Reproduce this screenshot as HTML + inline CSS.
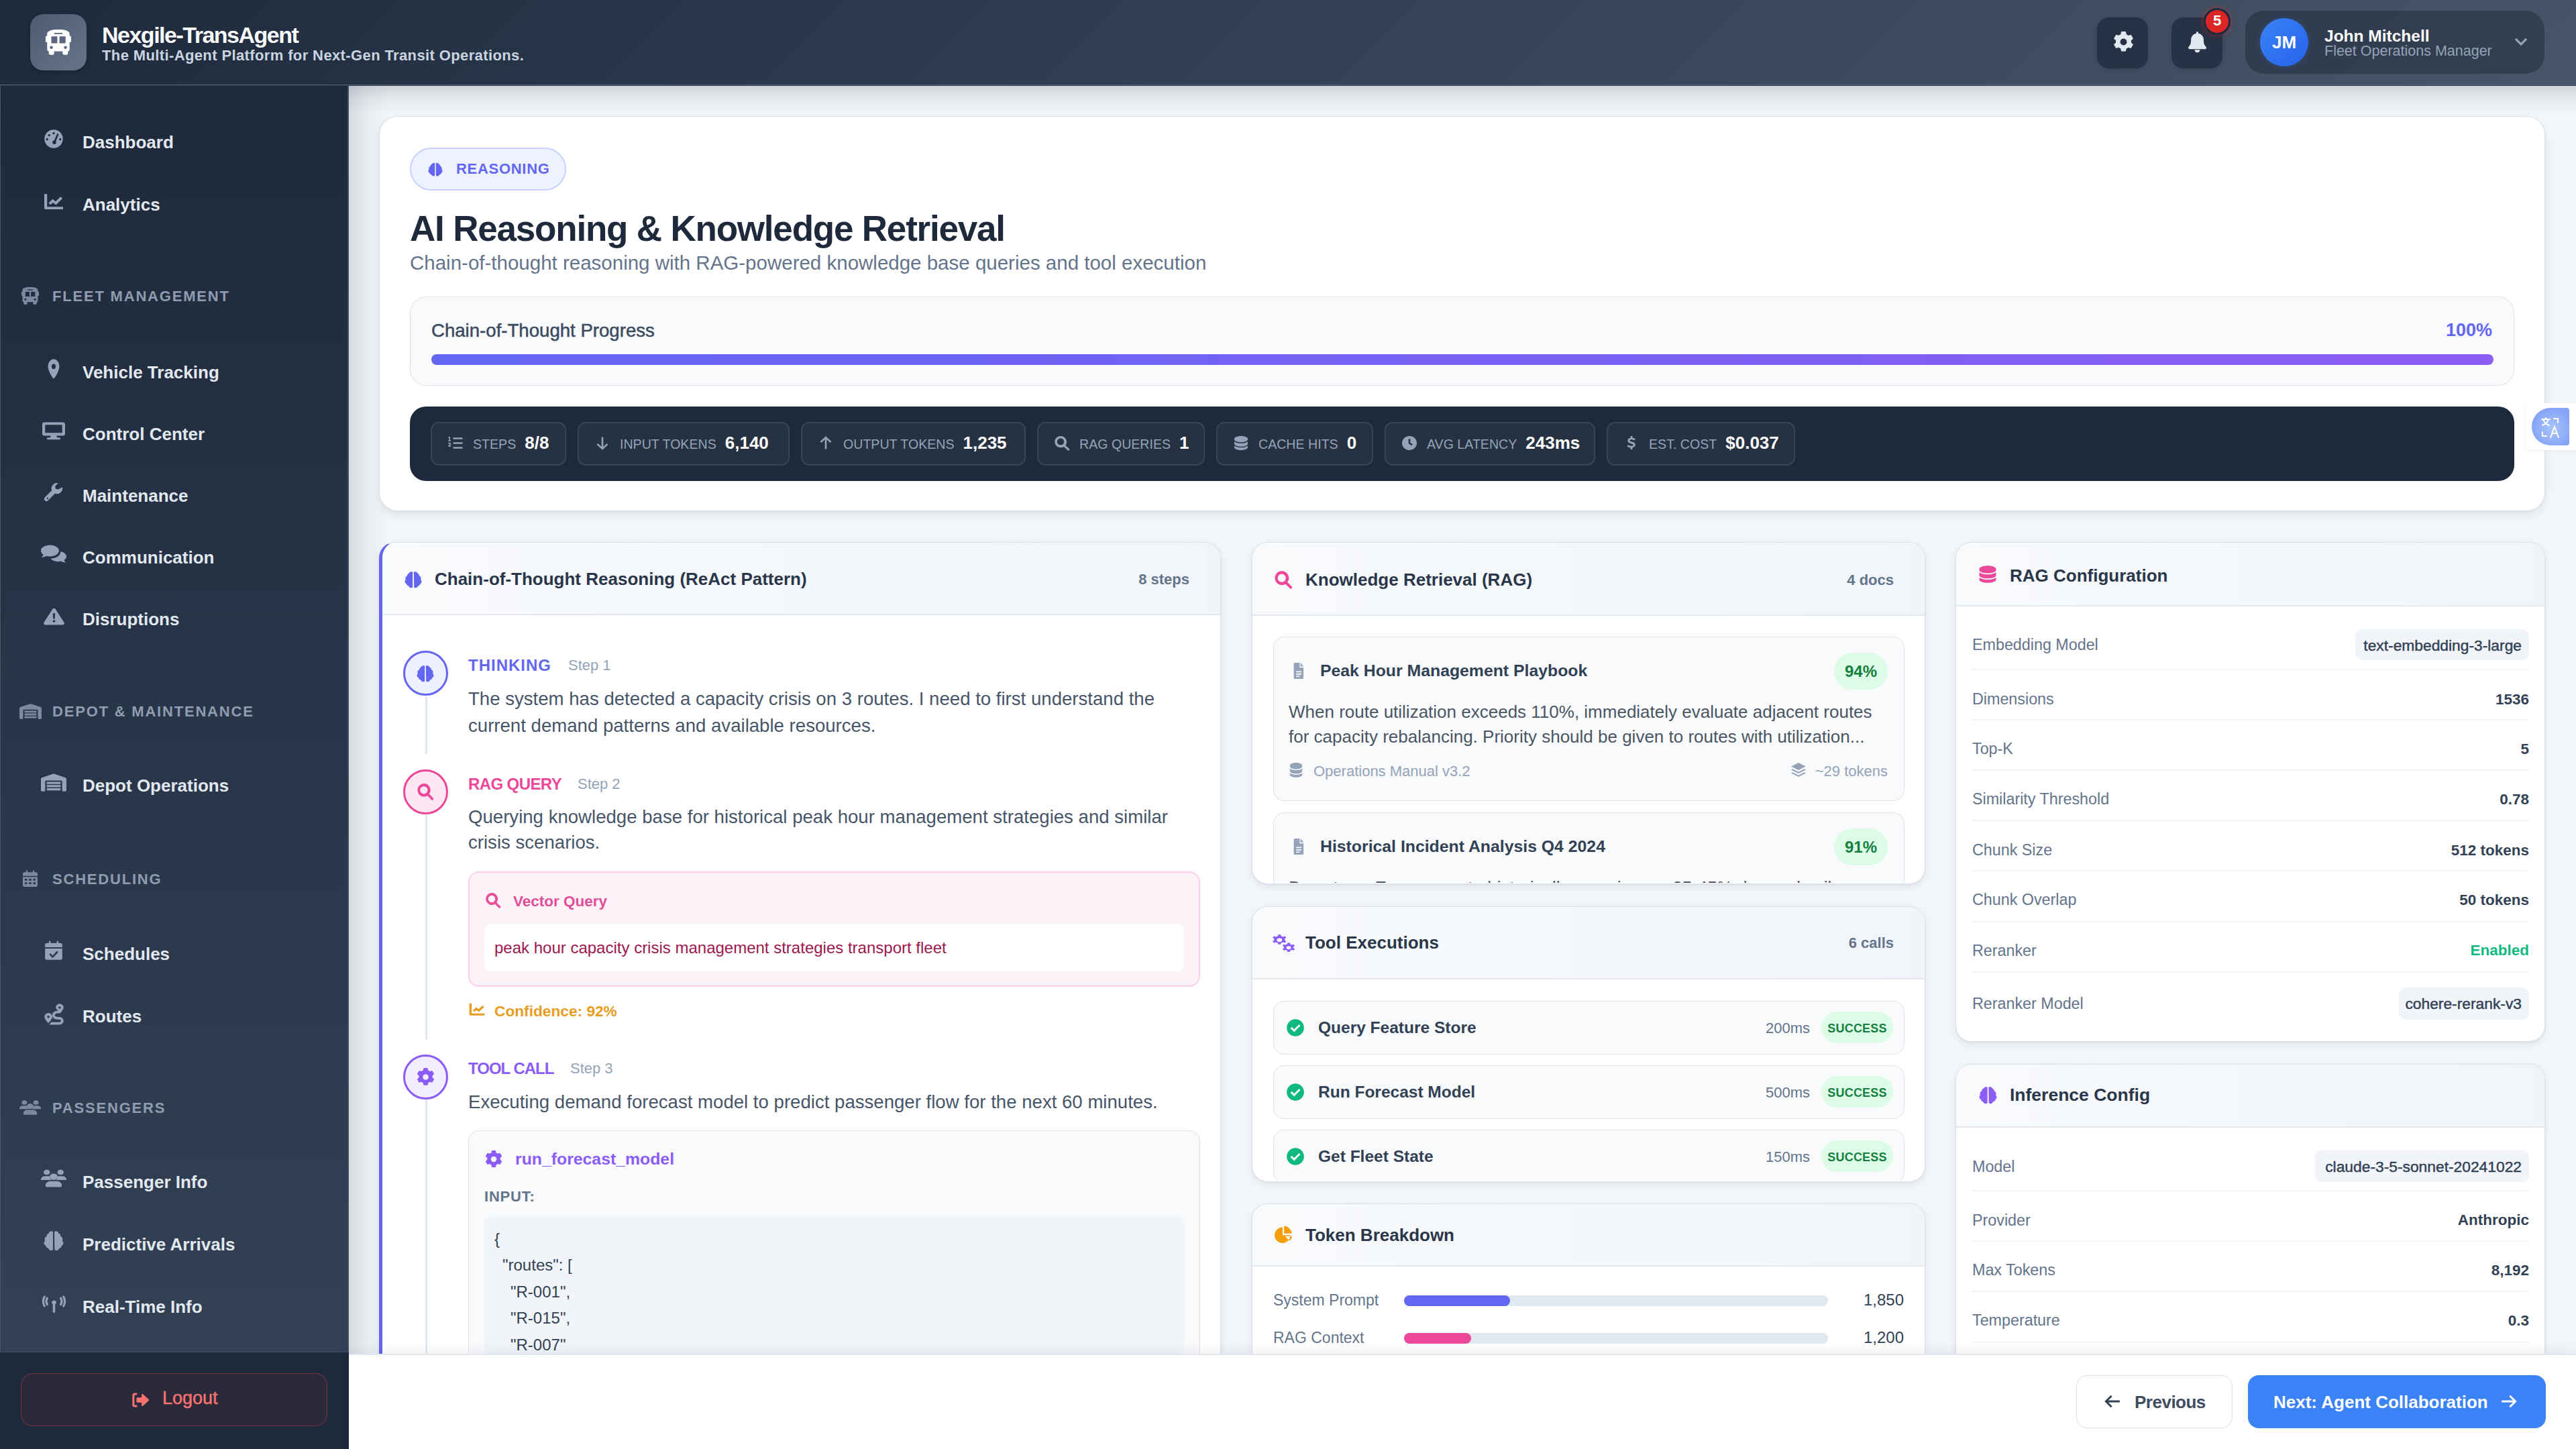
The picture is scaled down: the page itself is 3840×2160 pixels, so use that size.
<!DOCTYPE html>
<html><head><meta charset="utf-8"><title>Nexgile-TransAgent</title>
<style>
*{margin:0;padding:0;box-sizing:border-box;}
html,body{width:3840px;height:2160px;overflow:hidden;background:#f1f5f9;font-family:"Liberation Sans",sans-serif;}
.a{position:absolute;}
.t{position:absolute;white-space:nowrap;line-height:1;}
svg.a{overflow:visible;}
</style></head><body>
<div class="a" style="left:520px;top:128px;width:3320px;height:1890px;background:#f2f5f9;"></div>
<div class="a" style="left:520px;top:128px;width:3320px;height:44px;background:linear-gradient(to bottom,rgba(15,23,42,0.15),rgba(15,23,42,0.05) 45%,rgba(15,23,42,0));"></div>
<div class="a" style="left:520px;top:128px;width:60px;height:1890px;background:linear-gradient(to right,rgba(15,23,42,0.12),rgba(15,23,42,0.04) 45%,rgba(15,23,42,0));"></div>
<div class="a" style="left:0px;top:0px;width:3840px;height:126px;background:linear-gradient(135deg,#1e293b 0%,#334155 50%,#475569 100%);"></div>
<div class="a" style="left:0px;top:126px;width:3840px;height:1px;background:#56627a;"></div>
<div class="a" style="left:0px;top:127px;width:3840px;height:1px;background:#2b3647;"></div>
<div class="a" style="left:45px;top:21px;width:84px;height:84px;border-radius:20px;background:linear-gradient(135deg,#4e5b72,#66748c);box-shadow:0 2px 6px rgba(0,0,0,0.25);"></div>
<svg class="a" style="left:67.5px;top:44.2px;" width="38" height="38" viewBox="0 0 24 24" preserveAspectRatio="none"><path fill="#ffffff" fill-rule="evenodd" d="M1.45 4C1.45 1.2 6 0 12 0S22.55 1.2 22.55 4V19a1.5 1.5 0 0 1-1.5 1.5H2.95A1.5 1.5 0 0 1 1.45 19zM8.1 3.2v1.1h7.8V3.2zM5.4 6.4v6.6h5.6V6.4zm7.6 0v6.6h5.8V6.4zM5.4 15.45a1.45 1.45 0 1 0 0 2.9a1.45 1.45 0 1 0 0-2.9zm13.3 0a1.45 1.45 0 1 0 0 2.9a1.45 1.45 0 1 0 0-2.9z M1.45 6v6H1a1 1 0 0 1-1-1V7a1 1 0 0 1 1-1z M22.55 6v6H23a1 1 0 0 0 1-1V7a1 1 0 0 0-1-1z M3 20.5h5v1.9a1.5 1.5 0 0 1-1.5 1.5h-2A1.5 1.5 0 0 1 3 22.4z M16 20.5h5v1.9a1.5 1.5 0 0 1-1.5 1.5h-2a1.5 1.5 0 0 1-1.5-1.5z"/></svg>
<div class="t" style="left:152px;top:34.9px;font-size:34px;color:#f8fafc;font-weight:700;letter-spacing:-1.5px;">Nexgile-TransAgent</div>
<div class="t" style="left:152px;top:72.1px;font-size:22px;color:#cbd5e1;font-weight:700;letter-spacing:0.38px;">The Multi-Agent Platform for Next-Gen Transit Operations.</div>
<div class="a" style="left:3126px;top:26px;width:76px;height:76px;border-radius:18px;background:#263145;box-shadow:0 2px 6px rgba(0,0,0,0.15);"></div>
<svg class="a" style="left:3148.5px;top:45.5px;" width="33" height="33" viewBox="0 0 24 24" preserveAspectRatio="none"><path fill="#e2e8f0" fill-rule="evenodd" d="M9.6 0.8h4.8l.7 3c.8.3 1.5.7 2.1 1.2l2.9-.9l2.4 4.2l-2.2 2c.1.8.1 1.6 0 2.4l2.2 2l-2.4 4.2l-2.9-.9c-.6.5-1.3.9-2.1 1.2l-.7 3H9.6l-.7-3c-.8-.3-1.5-.7-2.1-1.2l-2.9.9l-2.4-4.2l2.2-2a8 8 0 0 1 0-2.4l-2.2-2l2.4-4.2l2.9.9c.6-.5 1.3-.9 2.1-1.2zM12 8.4a3.6 3.6 0 1 0 0 7.2a3.6 3.6 0 0 0 0-7.2z"/></svg>
<div class="a" style="left:3237px;top:26px;width:76px;height:76px;border-radius:18px;background:#273246;box-shadow:0 2px 6px rgba(0,0,0,0.15);"></div>
<svg class="a" style="left:3260px;top:46px;" width="31" height="31.5" viewBox="0 0 24 24" preserveAspectRatio="none"><path fill="#e2e8f0" fill-rule="evenodd" d="M10.8 1.2h2.4v1.6a7.3 7.3 0 0 1 6.1 7.2v1.8c0 2.2.8 4.3 2.3 6l.5.5a1.5 1.5 0 0 1-1.1 2.5H3a1.5 1.5 0 0 1-1.1-2.5l.5-.5a9 9 0 0 0 2.3-6V10a7.3 7.3 0 0 1 6.1-7.2z M9 21.5h6a3 3 0 0 1-6 0z"/></svg>
<div class="a" style="left:3285px;top:12px;width:40px;height:40px;border-radius:50%;background:#dc2626;border:3px solid #1e293b;box-shadow:0 0 10px rgba(220,38,38,0.5);"></div>
<div class="t" style="left:3305px;transform:translateX(-50%);top:20.4px;font-size:22px;color:#ffffff;font-weight:700;letter-spacing:0px;">5</div>
<div class="a" style="left:3347px;top:16px;width:446px;height:94px;border-radius:28px;background:rgba(17,24,39,0.35);"></div>
<div class="a" style="left:3369px;top:27px;width:72px;height:72px;border-radius:50%;background:linear-gradient(135deg,#3b82f6,#2563eb);box-shadow:0 0 10px rgba(59,130,246,0.25);"></div>
<div class="t" style="left:3405px;transform:translateX(-50%);top:50.0px;font-size:26px;color:#ffffff;font-weight:700;letter-spacing:0px;">JM</div>
<div class="t" style="left:3465px;top:41.6px;font-size:24.5px;color:#ffffff;font-weight:700;letter-spacing:0px;">John Mitchell</div>
<div class="t" style="left:3465px;top:65.8px;font-size:21.5px;color:#94a3b8;font-weight:400;letter-spacing:0px;">Fleet Operations Manager</div>
<svg class="a" style="left:3747px;top:52px;" width="22" height="22" viewBox="0 0 24 24" preserveAspectRatio="none"><path fill="#94a3b8" fill-rule="evenodd" d="M2 7.6l2.4-2.4L12 12.8l7.6-7.6L22 7.6L12 17.6z"/></svg>
<div class="a" style="left:0px;top:128px;width:520px;height:1888px;background:linear-gradient(to bottom,#1e293b,#334155);border-left:1px solid #4b5669;border-right:2px solid #434e63;"></div>
<svg class="a" style="left:65.0px;top:191.7px;" width="30" height="30" viewBox="0 0 24 24" preserveAspectRatio="none"><path fill="#94a3b8" fill-rule="evenodd" d="M12 1a11 11 0 1 1 0 22a11 11 0 0 1 0-22zm0 3a1.3 1.3 0 1 0 0 2.6a1.3 1.3 0 0 0 0-2.6zM6.5 6.3a1.3 1.3 0 1 0 0 2.6a1.3 1.3 0 0 0 0-2.6zM4.2 11.2a1.3 1.3 0 1 0 0 2.6a1.3 1.3 0 0 0 0-2.6zm15.6 0a1.3 1.3 0 1 0 0 2.6a1.3 1.3 0 0 0 0-2.6zM16.3 5.6l-3.6 8.2a2.3 2.3 0 1 0 1.9.9l3.5-8.3z"/></svg>
<div class="t" style="left:123px;top:198.7px;font-size:26px;color:#e2e8f0;font-weight:700;letter-spacing:0px;">Dashboard</div>
<svg class="a" style="left:64.0px;top:287px;" width="32" height="28" viewBox="0 0 24 24" preserveAspectRatio="none"><path fill="#94a3b8" fill-rule="evenodd" d="M1.5 2h3.2v16.3H22.5v3.2H3.5a2 2 0 0 1-2-2z M6.2 13.6l4.7-5.3l3.4 3l5.2-5.9l2.4 2.1l-7.3 8.3l-3.4-3l-2.6 2.9z"/></svg>
<div class="t" style="left:123px;top:292.0px;font-size:26px;color:#e2e8f0;font-weight:700;letter-spacing:0px;">Analytics</div>
<svg class="a" style="left:32.0px;top:428px;" width="26" height="26" viewBox="0 0 24 24" preserveAspectRatio="none"><path fill="#7b8aa0" fill-rule="evenodd" d="M1.45 4C1.45 1.2 6 0 12 0S22.55 1.2 22.55 4V19a1.5 1.5 0 0 1-1.5 1.5H2.95A1.5 1.5 0 0 1 1.45 19zM8.1 3.2v1.1h7.8V3.2zM5.4 6.4v6.6h5.6V6.4zm7.6 0v6.6h5.8V6.4zM5.4 15.45a1.45 1.45 0 1 0 0 2.9a1.45 1.45 0 1 0 0-2.9zm13.3 0a1.45 1.45 0 1 0 0 2.9a1.45 1.45 0 1 0 0-2.9z M1.45 6v6H1a1 1 0 0 1-1-1V7a1 1 0 0 1 1-1z M22.55 6v6H23a1 1 0 0 0 1-1V7a1 1 0 0 0-1-1z M3 20.5h5v1.9a1.5 1.5 0 0 1-1.5 1.5h-2A1.5 1.5 0 0 1 3 22.4z M16 20.5h5v1.9a1.5 1.5 0 0 1-1.5 1.5h-2a1.5 1.5 0 0 1-1.5-1.5z"/></svg>
<div class="t" style="left:78px;top:431.4px;font-size:22px;color:#8f9cb1;font-weight:700;letter-spacing:1.8px;">FLEET MANAGEMENT</div>
<svg class="a" style="left:68.0px;top:534px;" width="24" height="31" viewBox="0 0 24 24" preserveAspectRatio="none"><path fill="#94a3b8" fill-rule="evenodd" d="M12 1a8.5 8.5 0 0 1 8.5 8.5c0 4.6-5.7 11.6-7.4 13.4a1.5 1.5 0 0 1-2.2 0C9.2 21.1 3.5 14.1 3.5 9.5A8.5 8.5 0 0 1 12 1zm0 5.5a3 3 0 1 0 0 6a3 3 0 0 0 0-6z"/></svg>
<div class="t" style="left:123px;top:542.0px;font-size:26px;color:#e2e8f0;font-weight:700;letter-spacing:0px;">Vehicle Tracking</div>
<svg class="a" style="left:63.0px;top:626.5px;" width="34" height="30" viewBox="0 0 24 24" preserveAspectRatio="none"><path fill="#94a3b8" fill-rule="evenodd" d="M2.5 2h19A2.5 2.5 0 0 1 24 4.5v11a2.5 2.5 0 0 1-2.5 2.5H15l.6 2.2h2.4a1.2 1.2 0 0 1 0 2.4H6a1.2 1.2 0 0 1 0-2.4h2.4L9 18H2.5A2.5 2.5 0 0 1 0 15.5v-11A2.5 2.5 0 0 1 2.5 2zm.5 3v9.5h18V5z"/></svg>
<div class="t" style="left:123px;top:633.5px;font-size:26px;color:#e2e8f0;font-weight:700;letter-spacing:0px;">Control Center</div>
<svg class="a" style="left:64.5px;top:718px;" width="31" height="31" viewBox="0 0 24 24" preserveAspectRatio="none"><path fill="#94a3b8" fill-rule="evenodd" d="M21.6 6.3a6.5 6.5 0 0 1-8.5 7.5L5.2 21.7a2.6 2.6 0 0 1-3.7-3.7l7.9-7.9a6.5 6.5 0 0 1 7.5-8.5l-3.6 3.6l.6 3.1l3.1.6zM3.8 18.6a.9.9 0 1 0 1.6 1a.9.9 0 0 0-1.6-1z"/></svg>
<div class="t" style="left:123px;top:726.0px;font-size:26px;color:#e2e8f0;font-weight:700;letter-spacing:0px;">Maintenance</div>
<svg class="a" style="left:61.0px;top:810px;" width="38" height="31" viewBox="0 0 24 24" preserveAspectRatio="none"><path fill="#94a3b8" fill-rule="evenodd" d="M8.5 2C13.2 2 17 4.9 17 8.5S13.2 15 8.5 15c-1.2 0-2.3-.2-3.3-.5C4 15.4 2.3 16 0.5 16c.9-.9 1.6-2 1.8-3C.9 11.8 0 10.2 0 8.5C0 4.9 3.8 2 8.5 2z M18.6 9.3C21.6 10.1 24 12.4 24 15.2c0 1.6-.8 3-2.2 4c.2 1 .8 2 1.7 2.8c-1.8 0-3.4-.6-4.6-1.5c-.9.3-2 .5-3.1.5c-3 0-5.5-1.4-6.6-3.5c5.3-.2 9.4-3.6 9.4-8.2z"/></svg>
<div class="t" style="left:123px;top:818.0px;font-size:26px;color:#e2e8f0;font-weight:700;letter-spacing:0px;">Communication</div>
<svg class="a" style="left:64.5px;top:905px;" width="31" height="28" viewBox="0 0 24 24" preserveAspectRatio="none"><path fill="#94a3b8" fill-rule="evenodd" d="M12 1.5c.7 0 1.3.4 1.7 1l10 17.2a2 2 0 0 1-1.7 3H2a2 2 0 0 1-1.7-3l10-17.2c.4-.6 1-1 1.7-1zm-1.3 6.5l.3 7h2l.3-7zM12 16.5a1.5 1.5 0 1 0 0 3a1.5 1.5 0 0 0 0-3z"/></svg>
<div class="t" style="left:123px;top:910.0px;font-size:26px;color:#e2e8f0;font-weight:700;letter-spacing:0px;">Disruptions</div>
<svg class="a" style="left:28.5px;top:1047px;" width="33" height="26" viewBox="0 0 24 24" preserveAspectRatio="none"><path fill="#7b8aa0" fill-rule="evenodd" d="M0 21.5V8.3c0-.9.5-1.7 1.3-2L11.2 2.2a2 2 0 0 1 1.6 0l9.9 4.1c.8.3 1.3 1.1 1.3 2v13.2a1.5 1.5 0 0 1-1.5 1.5h-1a1.5 1.5 0 0 1-1.5-1.5V11.2a1.2 1.2 0 0 0-1.2-1.2H5.2A1.2 1.2 0 0 0 4 11.2v10.3A1.5 1.5 0 0 1 2.5 23h-1A1.5 1.5 0 0 1 0 21.5z M5.5 11.5h13v2.6h-13z M5.5 15.3h13v2.6h-13z M5.5 19.1h13v2.6h-13z"/></svg>
<div class="t" style="left:78px;top:1050.4px;font-size:22px;color:#8f9cb1;font-weight:700;letter-spacing:1.8px;">DEPOT &amp; MAINTENANCE</div>
<svg class="a" style="left:61.0px;top:1151px;" width="38" height="30" viewBox="0 0 24 24" preserveAspectRatio="none"><path fill="#94a3b8" fill-rule="evenodd" d="M0 21.5V8.3c0-.9.5-1.7 1.3-2L11.2 2.2a2 2 0 0 1 1.6 0l9.9 4.1c.8.3 1.3 1.1 1.3 2v13.2a1.5 1.5 0 0 1-1.5 1.5h-1a1.5 1.5 0 0 1-1.5-1.5V11.2a1.2 1.2 0 0 0-1.2-1.2H5.2A1.2 1.2 0 0 0 4 11.2v10.3A1.5 1.5 0 0 1 2.5 23h-1A1.5 1.5 0 0 1 0 21.5z M5.5 11.5h13v2.6h-13z M5.5 15.3h13v2.6h-13z M5.5 19.1h13v2.6h-13z"/></svg>
<div class="t" style="left:123px;top:1158.0px;font-size:26px;color:#e2e8f0;font-weight:700;letter-spacing:0px;">Depot Operations</div>
<svg class="a" style="left:33.0px;top:1297px;" width="24" height="26" viewBox="0 0 24 24" preserveAspectRatio="none"><path fill="#7b8aa0" fill-rule="evenodd" d="M6 0.5h2v2.5h8V0.5h2v2.5h2.5A2.5 2.5 0 0 1 23 5.5V8H1V5.5A2.5 2.5 0 0 1 3.5 3H6z M1 9.5h22v11a2.5 2.5 0 0 1-2.5 2.5h-17A2.5 2.5 0 0 1 1 20.5zM4 12v2.5h3.5V12zm6.2 0v2.5h3.6V12zm6.3 0v2.5H20V12zM4 16.8v2.6h3.5v-2.6zm6.2 0v2.6h3.6v-2.6zm6.3 0v2.6H20v-2.6z"/></svg>
<div class="t" style="left:78px;top:1300.4px;font-size:22px;color:#8f9cb1;font-weight:700;letter-spacing:1.8px;">SCHEDULING</div>
<svg class="a" style="left:66.0px;top:1401.5px;" width="28" height="30" viewBox="0 0 24 24" preserveAspectRatio="none"><path fill="#94a3b8" fill-rule="evenodd" d="M6 0.5h2v2.5h8V0.5h2v2.5h2.5A2.5 2.5 0 0 1 23 5.5V8H1V5.5A2.5 2.5 0 0 1 3.5 3H6z M1 9.5h22v11a2.5 2.5 0 0 1-2.5 2.5h-17A2.5 2.5 0 0 1 1 20.5zM16.3 12.4l-5.6 5.6l-2.9-2.9l-1.5 1.5l4.4 4.4l7.1-7.1z"/></svg>
<div class="t" style="left:123px;top:1408.5px;font-size:26px;color:#e2e8f0;font-weight:700;letter-spacing:0px;">Schedules</div>
<svg class="a" style="left:64.5px;top:1495px;" width="31" height="30" viewBox="0 0 24 24" preserveAspectRatio="none"><path fill="#94a3b8" fill-rule="evenodd" d="M18.5 1a4.5 4.5 0 0 1 4.5 4.5c0 2.3-3 5.8-4 6.8h-2.8c-2 0-3.2 1-3.2 2.3s1.2 2.2 3.2 2.2h1.8c2.8 0 5 2 5 4.6S20.8 26 18 26H6.5l2.4-3h9.1c1.2 0 2-.7 2-1.6s-.8-1.6-2-1.6h-1.8c-3.8 0-6.2-2.3-6.2-5.2s2.4-5.3 6.2-5.3h.5C15.6 8 14 6.7 14 5.5A4.5 4.5 0 0 1 18.5 1zm0 3.1a1.4 1.4 0 1 0 0 2.8a1.4 1.4 0 0 0 0-2.8z M5.5 12A4.5 4.5 0 0 1 10 16.5c0 2.5-3.6 6.6-4.5 7.5C4.6 23.1 1 19 1 16.5A4.5 4.5 0 0 1 5.5 12zm0 3.1a1.4 1.4 0 1 0 0 2.8a1.4 1.4 0 0 0 0-2.8z"/></svg>
<div class="t" style="left:123px;top:1502.0px;font-size:26px;color:#e2e8f0;font-weight:700;letter-spacing:0px;">Routes</div>
<svg class="a" style="left:29.0px;top:1638px;" width="32" height="26" viewBox="0 0 24 24" preserveAspectRatio="none"><path fill="#7b8aa0" fill-rule="evenodd" d="M5.5 2a3 3 0 1 1 0 6a3 3 0 0 1 0-6zm13 0a3 3 0 1 1 0 6a3 3 0 0 1 0-6zM12 6.5a3.7 3.7 0 1 1 0 7.4a3.7 3.7 0 0 1 0-7.4zM4.2 9.5h2.6c.6 0 1.1.1 1.6.3A5.3 5.3 0 0 0 9.9 14H0v-.8A3.7 3.7 0 0 1 4.2 9.5zm13 0h2.6A3.7 3.7 0 0 1 24 13.2v.8h-9.9a5.3 5.3 0 0 0 1.5-4.2c.5-.2 1-.3 1.6-.3zM9 15.3h6a4.7 4.7 0 0 1 4.7 4.7v.5c0 .9-.7 1.5-1.5 1.5H5.8c-.8 0-1.5-.6-1.5-1.5V20A4.7 4.7 0 0 1 9 15.3z"/></svg>
<div class="t" style="left:78px;top:1641.4px;font-size:22px;color:#8f9cb1;font-weight:700;letter-spacing:1.8px;">PASSENGERS</div>
<svg class="a" style="left:61.0px;top:1741px;" width="38" height="31" viewBox="0 0 24 24" preserveAspectRatio="none"><path fill="#94a3b8" fill-rule="evenodd" d="M5.5 2a3 3 0 1 1 0 6a3 3 0 0 1 0-6zm13 0a3 3 0 1 1 0 6a3 3 0 0 1 0-6zM12 6.5a3.7 3.7 0 1 1 0 7.4a3.7 3.7 0 0 1 0-7.4zM4.2 9.5h2.6c.6 0 1.1.1 1.6.3A5.3 5.3 0 0 0 9.9 14H0v-.8A3.7 3.7 0 0 1 4.2 9.5zm13 0h2.6A3.7 3.7 0 0 1 24 13.2v.8h-9.9a5.3 5.3 0 0 0 1.5-4.2c.5-.2 1-.3 1.6-.3zM9 15.3h6a4.7 4.7 0 0 1 4.7 4.7v.5c0 .9-.7 1.5-1.5 1.5H5.8c-.8 0-1.5-.6-1.5-1.5V20A4.7 4.7 0 0 1 9 15.3z"/></svg>
<div class="t" style="left:123px;top:1749.0px;font-size:26px;color:#e2e8f0;font-weight:700;letter-spacing:0px;">Passenger Info</div>
<svg class="a" style="left:65.0px;top:1834px;" width="30" height="31" viewBox="0 0 24 24" preserveAspectRatio="none"><path fill="#94a3b8" fill-rule="evenodd" d="M11.2 1.5v21c-1.4 1-2.6.9-3.6.5c-1.3-.6-1.7-1.6-1.9-2.2c-1.6-.2-3-1.5-3.2-3.2C1 16.9.3 15.7.5 14.3c.1-1 .7-1.8 1.3-2.3C1.3 11.2 1.1 10.1 1.5 9c.4-1.1 1.2-1.8 2.2-2.1C3.5 5.3 4.5 3.9 6 3.4c.5-1.3 1.6-2.1 2.9-2.2c.9-.1 1.7 0 2.3.3z M12.8 1.5c.6-.3 1.4-.4 2.3-.3c1.3.1 2.4.9 2.9 2.2c1.5.5 2.5 1.9 2.3 3.5c1 .3 1.8 1 2.2 2.1c.4 1.1.2 2.2-.3 3c.6.5 1.2 1.3 1.3 2.3c.2 1.4-.5 2.6-1.7 3.3c-.2 1.7-1.6 3-3.2 3.2c-.2.6-.6 1.6-1.9 2.2c-1 .4-2.2.5-3.6-.5z"/></svg>
<div class="t" style="left:123px;top:1842.0px;font-size:26px;color:#e2e8f0;font-weight:700;letter-spacing:0px;">Predictive Arrivals</div>
<svg class="a" style="left:62.5px;top:1928px;" width="35" height="30" viewBox="0 0 24 24" preserveAspectRatio="none"><path fill="#94a3b8" fill-rule="evenodd" d="M12 8.5a2.3 2.3 0 0 1 1.2 4.3V22a1.2 1.2 0 0 1-2.4 0v-9.2A2.3 2.3 0 0 1 12 8.5z M4.6 4.2l1.9 1.2a8 8 0 0 0 0 8.2l-1.9 1.2a10.2 10.2 0 0 1 0-10.6z M19.4 4.2a10.2 10.2 0 0 1 0 10.6l-1.9-1.2a8 8 0 0 0 0-8.2z M1.7 2.5l1.9 1a13 13 0 0 0 0 12l-1.9 1a15.2 15.2 0 0 1 0-14z M22.3 2.5a15.2 15.2 0 0 1 0 14l-1.9-1a13 13 0 0 0 0-12z"/></svg>
<div class="t" style="left:123px;top:1935.0px;font-size:26px;color:#e2e8f0;font-weight:700;letter-spacing:0px;">Real-Time Info</div>
<div class="a" style="left:0px;top:2015px;width:520px;height:145px;background:#1e293b;border-top:1px solid #3f4b5e;"></div>
<div class="a" style="left:31px;top:2047px;width:457px;height:79px;border-radius:18px;background:rgba(239,68,68,0.06);border:1px solid rgba(239,68,68,0.38);"></div>
<svg class="a" style="left:195px;top:2073px;" width="28" height="28" viewBox="0 0 24 24" preserveAspectRatio="none"><path fill="#f87171" fill-rule="evenodd" d="M8 3H5a3 3 0 0 0-3 3v12a3 3 0 0 0 3 3h3v-2.6H5a.4.4 0 0 1-.4-.4V6a.4.4 0 0 1 .4-.4h3z M15.5 4.5l7.3 6.7a1.1 1.1 0 0 1 0 1.6l-7.3 6.7A1 1 0 0 1 13.8 18.8V15.3H8.5A1.3 1.3 0 0 1 7.2 14v-4A1.3 1.3 0 0 1 8.5 8.7h5.3V5.2A1 1 0 0 1 15.5 4.5z"/></svg>
<div class="t" style="left:242px;top:2071.1px;font-size:27px;color:#f87171;font-weight:400;letter-spacing:0px;-webkit-text-stroke:0.5px #f87171;">Logout</div>
<div class="a" style="left:565px;top:173px;width:3229px;height:589px;border-radius:28px;background:#ffffff;border:1px solid #dce2e9;box-shadow:0 6px 14px rgba(15,23,42,0.07),0 1px 3px rgba(15,23,42,0.05);"></div>
<div class="a" style="left:611px;top:220px;width:233px;height:64px;border-radius:32px;background:#eef2ff;border:2px solid #c7d2fe;"></div>
<svg class="a" style="left:638px;top:242px;" width="22" height="21" viewBox="0 0 24 24" preserveAspectRatio="none"><path fill="#6366f1" fill-rule="evenodd" d="M11.2 1.5v21c-1.4 1-2.6.9-3.6.5c-1.3-.6-1.7-1.6-1.9-2.2c-1.6-.2-3-1.5-3.2-3.2C1 16.9.3 15.7.5 14.3c.1-1 .7-1.8 1.3-2.3C1.3 11.2 1.1 10.1 1.5 9c.4-1.1 1.2-1.8 2.2-2.1C3.5 5.3 4.5 3.9 6 3.4c.5-1.3 1.6-2.1 2.9-2.2c.9-.1 1.7 0 2.3.3z M12.8 1.5c.6-.3 1.4-.4 2.3-.3c1.3.1 2.4.9 2.9 2.2c1.5.5 2.5 1.9 2.3 3.5c1 .3 1.8 1 2.2 2.1c.4 1.1.2 2.2-.3 3c.6.5 1.2 1.3 1.3 2.3c.2 1.4-.5 2.6-1.7 3.3c-.2 1.7-1.6 3-3.2 3.2c-.2.6-.6 1.6-1.9 2.2c-1 .4-2.2.5-3.6-.5z"/></svg>
<div class="t" style="left:680px;top:241.4px;font-size:22px;color:#6366f1;font-weight:700;letter-spacing:0.7px;">REASONING</div>
<div class="t" style="left:611px;top:314.1px;font-size:53px;color:#1e293b;font-weight:700;letter-spacing:-1.2px;">AI Reasoning &amp; Knowledge Retrieval</div>
<div class="t" style="left:611px;top:377.0px;font-size:29.5px;color:#64748b;font-weight:400;letter-spacing:0px;">Chain-of-thought reasoning with RAG-powered knowledge base queries and tool execution</div>
<div class="a" style="left:611px;top:442px;width:3137px;height:133px;border-radius:24px;background:#f8fafc;border:1px solid #dce2e9;"></div>
<div class="t" style="left:643px;top:478.6px;font-size:27.6px;color:#3b4a5e;font-weight:400;letter-spacing:0px;-webkit-text-stroke:0.5px #3b4a5e;">Chain-of-Thought Progress</div>
<div class="t" style="right:125px;top:479.1px;font-size:27px;color:#6366f1;font-weight:700;letter-spacing:0px;">100%</div>
<div class="a" style="left:643px;top:528px;width:3074px;height:16px;border-radius:8px;background:linear-gradient(90deg,#6366f1,#8b5cf6);"></div>
<div class="a" style="left:611px;top:606px;width:3137px;height:111px;border-radius:24px;background:#1e293b;"></div>
<div class="a" style="left:642px;top:629px;width:202px;height:65px;border-radius:12px;background:rgba(255,255,255,0.04);border:2px solid rgba(255,255,255,0.09);"></div>
<svg class="a" style="left:667px;top:649px;" width="24" height="23" viewBox="0 0 24 24" preserveAspectRatio="none"><path fill="#94a3b8" fill-rule="evenodd" d="M2.3 2.2h1.6v5.3h1.2V9H1.1V7.5h1.2V4.2h-1.2z M8.5 3.5h14v2.6h-14z M8.5 10.7h14v2.6h-14z M8.5 17.9h14v2.6h-14z M1 13.2c.2-1.2 1.1-1.9 2.2-1.9c1.2 0 2.1.8 2.1 1.9c0 .9-.6 1.5-1.4 2.1l-.9.6h2.3v1.5H1v-1.3l1.9-1.5c.5-.4.8-.7.8-1.1c0-.4-.3-.6-.6-.6c-.4 0-.6.3-.6.7z"/></svg>
<div class="t" style="left:705px;top:647.0px;font-size:19.6px;color:#94a3b8;">STEPS<span style="font-size:26px;font-weight:700;color:#fff;margin-left:13px;">8/8</span></div>
<div class="a" style="left:861px;top:629px;width:316px;height:65px;border-radius:12px;background:rgba(255,255,255,0.04);border:2px solid rgba(255,255,255,0.09);"></div>
<svg class="a" style="left:886px;top:649px;" width="24" height="23" viewBox="0 0 24 24" preserveAspectRatio="none"><path fill="#94a3b8" fill-rule="evenodd" d="M10.7 2.5h2.6v15.2l5.3-5.3l1.9 1.9L12 22.8l-8.5-8.5l1.9-1.9l5.3 5.3z"/></svg>
<div class="t" style="left:924px;top:647.0px;font-size:19.6px;color:#94a3b8;">INPUT TOKENS<span style="font-size:26px;font-weight:700;color:#fff;margin-left:13px;">6,140</span></div>
<div class="a" style="left:1194px;top:629px;width:335px;height:65px;border-radius:12px;background:rgba(255,255,255,0.04);border:2px solid rgba(255,255,255,0.09);"></div>
<svg class="a" style="left:1219px;top:649px;" width="24" height="23" viewBox="0 0 24 24" preserveAspectRatio="none"><path fill="#94a3b8" fill-rule="evenodd" d="M10.7 21.5h2.6V6.3l5.3 5.3l1.9-1.9L12 1.2L3.5 9.7l1.9 1.9l5.3-5.3z"/></svg>
<div class="t" style="left:1257px;top:647.0px;font-size:19.6px;color:#94a3b8;">OUTPUT TOKENS<span style="font-size:26px;font-weight:700;color:#fff;margin-left:13px;">1,235</span></div>
<div class="a" style="left:1546px;top:629px;width:250px;height:65px;border-radius:12px;background:rgba(255,255,255,0.04);border:2px solid rgba(255,255,255,0.09);"></div>
<svg class="a" style="left:1571px;top:649px;" width="24" height="23" viewBox="0 0 24 24" preserveAspectRatio="none"><path fill="#94a3b8" fill-rule="evenodd" d="M10 1a9 9 0 0 1 7.3 14.3l5.6 5.6a1.7 1.7 0 0 1-2.4 2.4l-5.6-5.6A9 9 0 1 1 10 1zm0 3.8a5.2 5.2 0 1 0 0 10.4a5.2 5.2 0 0 0 0-10.4z"/></svg>
<div class="t" style="left:1609px;top:647.0px;font-size:19.6px;color:#94a3b8;">RAG QUERIES<span style="font-size:26px;font-weight:700;color:#fff;margin-left:13px;">1</span></div>
<div class="a" style="left:1813px;top:629px;width:234px;height:65px;border-radius:12px;background:rgba(255,255,255,0.04);border:2px solid rgba(255,255,255,0.09);"></div>
<svg class="a" style="left:1838px;top:649px;" width="24" height="23" viewBox="0 0 24 24" preserveAspectRatio="none"><path fill="#94a3b8" fill-rule="evenodd" d="M12 1c5.5 0 10 1.9 10 4.2v1.4C22 8.9 17.5 10.8 12 10.8S2 8.9 2 6.6V5.2C2 2.9 6.5 1 12 1z M2 9.6c2 1.7 5.9 2.7 10 2.7s8-1 10-2.7v3.6c0 2.3-4.5 4.2-10 4.2S2 15.5 2 13.2z M2 16.2c2 1.7 5.9 2.7 10 2.7s8-1 10-2.7v2.6C22 21.1 17.5 23 12 23S2 21.1 2 18.8z"/></svg>
<div class="t" style="left:1876px;top:647.0px;font-size:19.6px;color:#94a3b8;">CACHE HITS<span style="font-size:26px;font-weight:700;color:#fff;margin-left:13px;">0</span></div>
<div class="a" style="left:2064px;top:629px;width:314px;height:65px;border-radius:12px;background:rgba(255,255,255,0.04);border:2px solid rgba(255,255,255,0.09);"></div>
<svg class="a" style="left:2089px;top:649px;" width="24" height="23" viewBox="0 0 24 24" preserveAspectRatio="none"><path fill="#94a3b8" fill-rule="evenodd" d="M12 1a11 11 0 1 1 0 22a11 11 0 0 1 0-22zm-1.3 4.5v7.2l4.8 3.2l1.4-2.1l-3.6-2.4V5.5z"/></svg>
<div class="t" style="left:2127px;top:647.0px;font-size:19.6px;color:#94a3b8;">AVG LATENCY<span style="font-size:26px;font-weight:700;color:#fff;margin-left:13px;">243ms</span></div>
<div class="a" style="left:2395px;top:629px;width:281px;height:65px;border-radius:12px;background:rgba(255,255,255,0.04);border:2px solid rgba(255,255,255,0.09);"></div>
<svg class="a" style="left:2420px;top:649px;" width="24" height="23" viewBox="0 0 24 24" preserveAspectRatio="none"><path fill="#94a3b8" fill-rule="evenodd" d="M10.6 1h2.8v2.6c1.7.3 3.2 1 4.3 1.7l-1.2 2.5c-1.4-.8-3-1.4-4.6-1.4c-1.6 0-2.5.6-2.5 1.5c0 1 1 1.4 3.2 2c3 .8 5.2 1.9 5.2 4.8c0 2.3-1.7 4-4.4 4.4V22h-2.8v-2.8c-2-.3-3.8-1-5.1-2l1.3-2.5c1.5 1 3.5 1.7 5.1 1.7c1.8 0 2.7-.6 2.7-1.6c0-1-.9-1.4-3.3-2.1c-2.9-.8-5-1.9-5-4.6c0-2.2 1.6-3.9 4.3-4.4z"/></svg>
<div class="t" style="left:2458px;top:647.0px;font-size:19.6px;color:#94a3b8;">EST. COST<span style="font-size:26px;font-weight:700;color:#fff;margin-left:13px;">$0.037</span></div>
<div class="a" style="left:3764px;top:601px;width:76px;height:70px;border-radius:2px 0 0 2px;background:#ffffff;box-shadow:0 1px 4px rgba(15,23,42,0.06);"></div>
<div class="a" style="left:3774px;top:608px;width:56px;height:56px;border-radius:28px 4px 4px 28px;background:radial-gradient(circle at 55% 55%,#a9c4fb,#86a4f7 70%);"></div>
<svg class="a" style="left:3786px;top:620px;" width="34" height="34" viewBox="0 0 34 34" preserveAspectRatio="none"><g fill="none" stroke="#ffffff" stroke-width="2" stroke-linecap="round"><path d="M3 5h12M9 3v2M5 5c1 4 4 7 9 9M13 5c-1 4-4 7-9 9"/><path d="M21 4h6v6M4 24v6h6"/><path d="M16 32l6-16l6 16M18.5 26h7"/></g></svg>
<div class="a" style="left:565px;top:808px;width:1255px;height:1300px;border-radius:24px;background:#ffffff;border:1px solid #dce2e9;border-left:5px solid #6366f1;overflow:hidden;box-shadow:0 4px 12px rgba(15,23,42,0.07),0 1px 3px rgba(15,23,42,0.05);"><div style="position:absolute;left:0;top:0;right:0;height:108px;background:linear-gradient(90deg,#f8fafc,#f1f5f9);border-bottom:2px solid #e3e8ee;"></div></div>
<svg class="a" style="left:603px;top:851px;" width="26" height="26" viewBox="0 0 24 24" preserveAspectRatio="none"><path fill="#6366f1" fill-rule="evenodd" d="M11.2 1.5v21c-1.4 1-2.6.9-3.6.5c-1.3-.6-1.7-1.6-1.9-2.2c-1.6-.2-3-1.5-3.2-3.2C1 16.9.3 15.7.5 14.3c.1-1 .7-1.8 1.3-2.3C1.3 11.2 1.1 10.1 1.5 9c.4-1.1 1.2-1.8 2.2-2.1C3.5 5.3 4.5 3.9 6 3.4c.5-1.3 1.6-2.1 2.9-2.2c.9-.1 1.7 0 2.3.3z M12.8 1.5c.6-.3 1.4-.4 2.3-.3c1.3.1 2.4.9 2.9 2.2c1.5.5 2.5 1.9 2.3 3.5c1 .3 1.8 1 2.2 2.1c.4 1.1.2 2.2-.3 3c.6.5 1.2 1.3 1.3 2.3c.2 1.4-.5 2.6-1.7 3.3c-.2 1.7-1.6 3-3.2 3.2c-.2.6-.6 1.6-1.9 2.2c-1 .4-2.2.5-3.6-.5z"/></svg>
<div class="t" style="left:648px;top:850.0px;font-size:26px;color:#2a3649;font-weight:700;letter-spacing:0px;">Chain-of-Thought Reasoning (ReAct Pattern)</div>
<div class="t" style="right:2067px;top:853.4px;font-size:22px;color:#64748b;font-weight:700;letter-spacing:0px;">8 steps</div>
<div class="a" style="left:634px;top:1038px;width:3px;height:86px;background:#e2e8f0;"></div>
<div class="a" style="left:634px;top:1214px;width:3px;height:336px;background:#e2e8f0;"></div>
<div class="a" style="left:634px;top:1639px;width:3px;height:400px;background:#e2e8f0;"></div>
<div class="a" style="left:601px;top:970.0px;width:67px;height:67px;border-radius:50%;background:#eef0fe;border:3.5px solid #6366f1;"></div>
<svg class="a" style="left:621.0px;top:990.5px;" width="26" height="26" viewBox="0 0 24 24" preserveAspectRatio="none"><path fill="#6366f1" fill-rule="evenodd" d="M11.2 1.5v21c-1.4 1-2.6.9-3.6.5c-1.3-.6-1.7-1.6-1.9-2.2c-1.6-.2-3-1.5-3.2-3.2C1 16.9.3 15.7.5 14.3c.1-1 .7-1.8 1.3-2.3C1.3 11.2 1.1 10.1 1.5 9c.4-1.1 1.2-1.8 2.2-2.1C3.5 5.3 4.5 3.9 6 3.4c.5-1.3 1.6-2.1 2.9-2.2c.9-.1 1.7 0 2.3.3z M12.8 1.5c.6-.3 1.4-.4 2.3-.3c1.3.1 2.4.9 2.9 2.2c1.5.5 2.5 1.9 2.3 3.5c1 .3 1.8 1 2.2 2.1c.4 1.1.2 2.2-.3 3c.6.5 1.2 1.3 1.3 2.3c.2 1.4-.5 2.6-1.7 3.3c-.2 1.7-1.6 3-3.2 3.2c-.2.6-.6 1.6-1.9 2.2c-1 .4-2.2.5-3.6-.5z"/></svg>
<div class="t" style="left:698px;top:979.7px;font-size:24px;color:#6366f1;font-weight:700;letter-spacing:1px;">THINKING</div>
<div class="t" style="left:847px;top:981.4px;font-size:22px;color:#94a3b8;font-weight:400;letter-spacing:0px;">Step 1</div>
<div class="t" style="left:698px;top:1028.1px;font-size:27.6px;color:#475569;font-weight:400;letter-spacing:0px;">The system has detected a capacity crisis on 3 routes. I need to first understand the</div>
<div class="t" style="left:698px;top:1067.6px;font-size:27.6px;color:#475569;font-weight:400;letter-spacing:0px;">current demand patterns and available resources.</div>
<div class="a" style="left:601px;top:1146.5px;width:67px;height:67px;border-radius:50%;background:#fce7f3;border:3.5px solid #ec4899;"></div>
<svg class="a" style="left:621.0px;top:1167.0px;" width="26" height="26" viewBox="0 0 24 24" preserveAspectRatio="none"><path fill="#ec4899" fill-rule="evenodd" d="M10 1a9 9 0 0 1 7.3 14.3l5.6 5.6a1.7 1.7 0 0 1-2.4 2.4l-5.6-5.6A9 9 0 1 1 10 1zm0 3.8a5.2 5.2 0 1 0 0 10.4a5.2 5.2 0 0 0 0-10.4z"/></svg>
<div class="t" style="left:698px;top:1156.7px;font-size:24px;color:#ec4899;font-weight:700;letter-spacing:-0.6px;">RAG QUERY</div>
<div class="t" style="left:861px;top:1158.4px;font-size:22px;color:#94a3b8;font-weight:400;letter-spacing:0px;">Step 2</div>
<div class="t" style="left:698px;top:1203.6px;font-size:27.6px;color:#475569;font-weight:400;letter-spacing:0px;">Querying knowledge base for historical peak hour management strategies and similar</div>
<div class="t" style="left:698px;top:1242.1px;font-size:27.6px;color:#475569;font-weight:400;letter-spacing:0px;">crisis scenarios.</div>
<div class="a" style="left:698px;top:1299px;width:1091px;height:172px;border-radius:16px;background:#fdf2f8;border:2px solid #fbcfe8;"></div>
<svg class="a" style="left:723px;top:1330px;" width="24" height="24" viewBox="0 0 24 24" preserveAspectRatio="none"><path fill="#e64f9a" fill-rule="evenodd" d="M10 1a9 9 0 0 1 7.3 14.3l5.6 5.6a1.7 1.7 0 0 1-2.4 2.4l-5.6-5.6A9 9 0 1 1 10 1zm0 3.8a5.2 5.2 0 1 0 0 10.4a5.2 5.2 0 0 0 0-10.4z"/></svg>
<div class="t" style="left:765px;top:1332.5px;font-size:22.5px;color:#e04e97;font-weight:700;letter-spacing:0px;">Vector Query</div>
<div class="a" style="left:722px;top:1377px;width:1043px;height:71px;border-radius:10px;background:#ffffff;"></div>
<div class="t" style="left:737px;top:1400.7px;font-size:24px;color:#9d174d;font-weight:400;letter-spacing:0px;">peak hour capacity crisis management strategies transport fleet</div>
<svg class="a" style="left:698px;top:1494px;" width="26" height="22" viewBox="0 0 24 24" preserveAspectRatio="none"><path fill="#e89c22" fill-rule="evenodd" d="M1.5 2h3.2v16.3H22.5v3.2H3.5a2 2 0 0 1-2-2z M6.2 13.6l4.7-5.3l3.4 3l5.2-5.9l2.4 2.1l-7.3 8.3l-3.4-3l-2.6 2.9z"/></svg>
<div class="t" style="left:737px;top:1496.3px;font-size:22.7px;color:#e89c22;font-weight:700;letter-spacing:0px;">Confidence: 92%</div>
<div class="a" style="left:601px;top:1571.5px;width:67px;height:67px;border-radius:50%;background:#f3eefe;border:3.5px solid #8b5cf6;"></div>
<svg class="a" style="left:619.5px;top:1590.5px;" width="29" height="29" viewBox="0 0 24 24" preserveAspectRatio="none"><path fill="#8b5cf6" fill-rule="evenodd" d="M9.6 0.8h4.8l.7 3c.8.3 1.5.7 2.1 1.2l2.9-.9l2.4 4.2l-2.2 2c.1.8.1 1.6 0 2.4l2.2 2l-2.4 4.2l-2.9-.9c-.6.5-1.3.9-2.1 1.2l-.7 3H9.6l-.7-3c-.8-.3-1.5-.7-2.1-1.2l-2.9.9l-2.4-4.2l2.2-2a8 8 0 0 1 0-2.4l-2.2-2l2.4-4.2l2.9.9c.6-.5 1.3-.9 2.1-1.2zM12 8.4a3.6 3.6 0 1 0 0 7.2a3.6 3.6 0 0 0 0-7.2z"/></svg>
<div class="t" style="left:698px;top:1580.7px;font-size:24px;color:#8b5cf6;font-weight:700;letter-spacing:-1px;">TOOL CALL</div>
<div class="t" style="left:850px;top:1582.4px;font-size:22px;color:#94a3b8;font-weight:400;letter-spacing:0px;">Step 3</div>
<div class="t" style="left:698px;top:1628.6px;font-size:27.6px;color:#475569;font-weight:400;letter-spacing:0px;">Executing demand forecast model to predict passenger flow for the next 60 minutes.</div>
<div class="a" style="left:698px;top:1685px;width:1091px;height:500px;border-radius:16px;background:#f8fafc;border:1px solid #dce2e9;"></div>
<svg class="a" style="left:722px;top:1714px;" width="28" height="28" viewBox="0 0 24 24" preserveAspectRatio="none"><path fill="#8b5cf6" fill-rule="evenodd" d="M9.6 0.8h4.8l.7 3c.8.3 1.5.7 2.1 1.2l2.9-.9l2.4 4.2l-2.2 2c.1.8.1 1.6 0 2.4l2.2 2l-2.4 4.2l-2.9-.9c-.6.5-1.3.9-2.1 1.2l-.7 3H9.6l-.7-3c-.8-.3-1.5-.7-2.1-1.2l-2.9.9l-2.4-4.2l2.2-2a8 8 0 0 1 0-2.4l-2.2-2l2.4-4.2l2.9.9c.6-.5 1.3-.9 2.1-1.2zM12 8.4a3.6 3.6 0 1 0 0 7.2a3.6 3.6 0 0 0 0-7.2z"/></svg>
<div class="t" style="left:768px;top:1715.5px;font-size:24.8px;color:#8b5cf6;font-weight:700;letter-spacing:0px;">run_forecast_model</div>
<div class="t" style="left:722px;top:1772.9px;font-size:22px;color:#64748b;font-weight:700;letter-spacing:0.8px;">INPUT:</div>
<div class="a" style="left:722px;top:1812px;width:1043px;height:400px;border-radius:10px;background:#f1f5f9;"></div>
<div class="t" style="left:737px;top:1834.7px;font-size:24px;color:#334155;font-weight:400;letter-spacing:0px;">{</div>
<div class="t" style="left:749px;top:1873.7px;font-size:24px;color:#334155;font-weight:400;letter-spacing:0px;">"routes": [</div>
<div class="t" style="left:761px;top:1913.7px;font-size:24px;color:#334155;font-weight:400;letter-spacing:0px;">"R-001",</div>
<div class="t" style="left:761px;top:1953.2px;font-size:24px;color:#334155;font-weight:400;letter-spacing:0px;">"R-015",</div>
<div class="t" style="left:761px;top:1992.7px;font-size:24px;color:#334155;font-weight:400;letter-spacing:0px;">"R-007"</div>
<div class="a" style="left:1866px;top:808px;width:1004px;height:510px;border-radius:24px;background:#ffffff;border:1px solid #dce2e9;overflow:hidden;box-shadow:0 4px 12px rgba(15,23,42,0.07),0 1px 3px rgba(15,23,42,0.05);"><div style="position:absolute;left:0;top:0;right:0;height:109px;background:linear-gradient(90deg,#f8fafc,#f1f5f9);border-bottom:2px solid #e3e8ee;"></div></div>
<svg class="a" style="left:1899px;top:850px;" width="28" height="28" viewBox="0 0 24 24" preserveAspectRatio="none"><path fill="#ec4899" fill-rule="evenodd" d="M10 1a9 9 0 0 1 7.3 14.3l5.6 5.6a1.7 1.7 0 0 1-2.4 2.4l-5.6-5.6A9 9 0 1 1 10 1zm0 3.8a5.2 5.2 0 1 0 0 10.4a5.2 5.2 0 0 0 0-10.4z"/></svg>
<div class="t" style="left:1946px;top:850.5px;font-size:26px;color:#2a3649;font-weight:700;letter-spacing:0px;">Knowledge Retrieval (RAG)</div>
<div class="t" style="right:1017px;top:853.9px;font-size:22px;color:#64748b;font-weight:700;letter-spacing:0px;">4 docs</div>
<div class="a" style="left:1898px;top:949px;width:941px;height:245px;border-radius:16px;background:#f8fafc;border:1px solid #dce2e9;"></div>
<svg class="a" style="left:1926px;top:987px;" width="21" height="26" viewBox="0 0 24 24" preserveAspectRatio="none"><path fill="#94a3b8" fill-rule="evenodd" d="M4.5 1h8.5v6.5h6.5v14a1.5 1.5 0 0 1-1.5 1.5H4.5A1.5 1.5 0 0 1 3 21.5v-19A1.5 1.5 0 0 1 4.5 1z M14.5 1l5 5h-5z M7 12.5v1.5h9v-1.5zm0 3.2v1.5h9v-1.5zm0 3.2v1.5h6v-1.5z"/></svg>
<div class="t" style="left:1968px;top:988.0px;font-size:24.8px;color:#334155;font-weight:700;letter-spacing:0px;">Peak Hour Management Playbook</div>
<div class="a" style="left:2734px;top:973px;width:80px;height:55px;border-radius:28px;background:#dcfce7;"></div>
<div class="t" style="left:2774px;transform:translateX(-50%);top:988.7px;font-size:24px;color:#15803d;font-weight:700;letter-spacing:0px;">94%</div>
<div class="t" style="left:1921px;top:1048.0px;font-size:26px;color:#4b5563;font-weight:400;letter-spacing:0px;">When route utilization exceeds 110%, immediately evaluate adjacent routes</div>
<div class="t" style="left:1921px;top:1085.0px;font-size:26px;color:#4b5563;font-weight:400;letter-spacing:0px;">for capacity rebalancing. Priority should be given to routes with utilization...</div>
<svg class="a" style="left:1921px;top:1136px;" width="22" height="24" viewBox="0 0 24 24" preserveAspectRatio="none"><path fill="#94a3b8" fill-rule="evenodd" d="M12 1c5.5 0 10 1.9 10 4.2v1.4C22 8.9 17.5 10.8 12 10.8S2 8.9 2 6.6V5.2C2 2.9 6.5 1 12 1z M2 9.6c2 1.7 5.9 2.7 10 2.7s8-1 10-2.7v3.6c0 2.3-4.5 4.2-10 4.2S2 15.5 2 13.2z M2 16.2c2 1.7 5.9 2.7 10 2.7s8-1 10-2.7v2.6C22 21.1 17.5 23 12 23S2 21.1 2 18.8z"/></svg>
<div class="t" style="left:1958px;top:1139.4px;font-size:22px;color:#94a3b8;font-weight:400;letter-spacing:0px;">Operations Manual v3.2</div>
<svg class="a" style="left:2669px;top:1136px;" width="24" height="24" viewBox="0 0 24 24" preserveAspectRatio="none"><path fill="#94a3b8" fill-rule="evenodd" d="M12 1l11 5.5l-11 5.5L1 6.5z M3.3 10.3l8.7 4.4l8.7-4.4l2.3 1.2l-11 5.5l-11-5.5z M3.3 15.3l8.7 4.4l8.7-4.4l2.3 1.2l-11 5.5l-11-5.5z"/></svg>
<div class="t" style="right:1026px;top:1139.4px;font-size:22px;color:#94a3b8;font-weight:400;letter-spacing:0px;">~29 tokens</div>
<div class="a" style="left:1869px;top:1200px;width:999px;height:116px;overflow:hidden;">
<div class="a" style="left:29px;top:11px;width:941px;height:245px;border-radius:16px;background:#f8fafc;border:1px solid #dce2e9;"></div>
<svg class="a" style="left:57px;top:49px;" width="21" height="26" viewBox="0 0 24 24" preserveAspectRatio="none"><path fill="#94a3b8" fill-rule="evenodd" d="M4.5 1h8.5v6.5h6.5v14a1.5 1.5 0 0 1-1.5 1.5H4.5A1.5 1.5 0 0 1 3 21.5v-19A1.5 1.5 0 0 1 4.5 1z M14.5 1l5 5h-5z M7 12.5v1.5h9v-1.5zm0 3.2v1.5h9v-1.5zm0 3.2v1.5h6v-1.5z"/></svg>
<div class="t" style="left:99px;top:50.0px;font-size:24.8px;color:#334155;font-weight:700;letter-spacing:0px;">Historical Incident Analysis Q4 2024</div>
<div class="a" style="left:865px;top:35px;width:80px;height:55px;border-radius:28px;background:#dcfce7;"></div>
<div class="t" style="left:905px;transform:translateX(-50%);top:50.7px;font-size:24px;color:#15803d;font-weight:700;letter-spacing:0px;">91%</div>
<div class="t" style="left:52px;top:110.0px;font-size:26px;color:#4b5563;font-weight:400;letter-spacing:0px;">Downtown Express route historically experiences 25-45% demand spikes</div>
</div>
<div class="a" style="left:1866px;top:1351px;width:1004px;height:411px;border-radius:24px;background:#ffffff;border:1px solid #dce2e9;overflow:hidden;box-shadow:0 4px 12px rgba(15,23,42,0.07),0 1px 3px rgba(15,23,42,0.05);"><div style="position:absolute;left:0;top:0;right:0;height:108px;background:linear-gradient(90deg,#f8fafc,#f1f5f9);border-bottom:2px solid #e3e8ee;"></div></div>
<svg class="a" style="left:1893px;top:1392px;" width="38" height="27" viewBox="0 0 24 24" preserveAspectRatio="none"><path fill="#8b5cf6" fill-rule="evenodd" d="M7.8 1h2.4l.4 2c.6.2 1.2.5 1.7.9l1.9-.7l1.2 2.1l-1.5 1.3c.1.6.1 1.3 0 1.9l1.5 1.3l-1.2 2.1l-1.9-.7c-.5.4-1.1.7-1.7.9l-.4 2H7.8l-.4-2c-.6-.2-1.2-.5-1.7-.9l-1.9.7l-1.2-2.1l1.5-1.3a4.8 4.8 0 0 1 0-1.9L2.6 5.3l1.2-2.1l1.9.7c.5-.4 1.1-.7 1.7-.9zM9 5.8a2.5 2.5 0 1 0 0 5a2.5 2.5 0 0 0 0-5z M16.6 12h2.2l.4 1.8c.5.2 1 .5 1.5.8l1.7-.6l1.1 1.9l-1.4 1.2c.1.5.1 1.1 0 1.7l1.4 1.2l-1.1 1.9l-1.7-.6c-.5.3-1 .6-1.5.8l-.4 1.8h-2.2l-.4-1.8c-.5-.2-1-.5-1.5-.8l-1.7.6l-1.1-1.9l1.4-1.2a4.5 4.5 0 0 1 0-1.7l-1.4-1.2l1.1-1.9l1.7.6c.5-.3 1-.6 1.5-.8zm1.1 4.2a2.2 2.2 0 1 0 0 4.4a2.2 2.2 0 0 0 0-4.4z"/></svg>
<div class="t" style="left:1946px;top:1392.0px;font-size:26px;color:#2a3649;font-weight:700;letter-spacing:0px;">Tool Executions</div>
<div class="t" style="right:1017px;top:1395.4px;font-size:22px;color:#64748b;font-weight:700;letter-spacing:0px;">6 calls</div>
<div class="a" style="left:1898px;top:1492px;width:941px;height:80px;border-radius:16px;background:#f8fafc;border:1px solid #dce2e9;"></div>
<svg class="a" style="left:1917px;top:1518px;" width="28" height="28" viewBox="0 0 24 24" preserveAspectRatio="none"><path fill="#10b981" fill-rule="evenodd" d="M12 1a11 11 0 1 1 0 22a11 11 0 0 1 0-22zm4.6 6.7l-6.2 6.2l-2.9-2.9l-1.8 1.8l4.7 4.7l8-8z"/></svg>
<div class="t" style="left:1965px;top:1520.3px;font-size:24.5px;color:#334155;font-weight:700;letter-spacing:0px;">Query Feature Store</div>
<div class="t" style="right:1142px;top:1522.4px;font-size:22px;color:#64748b;font-weight:400;letter-spacing:0px;">200ms</div>
<div class="a" style="left:2715px;top:1508px;width:107px;height:47px;border-radius:24px;background:#dcfce7;"></div>
<div class="t" style="left:2768.5px;transform:translateX(-50%);top:1523.8px;font-size:18px;color:#15803d;font-weight:700;letter-spacing:0.2px;">SUCCESS</div>
<div class="a" style="left:1898px;top:1588px;width:941px;height:80px;border-radius:16px;background:#f8fafc;border:1px solid #dce2e9;"></div>
<svg class="a" style="left:1917px;top:1614px;" width="28" height="28" viewBox="0 0 24 24" preserveAspectRatio="none"><path fill="#10b981" fill-rule="evenodd" d="M12 1a11 11 0 1 1 0 22a11 11 0 0 1 0-22zm4.6 6.7l-6.2 6.2l-2.9-2.9l-1.8 1.8l4.7 4.7l8-8z"/></svg>
<div class="t" style="left:1965px;top:1616.3px;font-size:24.5px;color:#334155;font-weight:700;letter-spacing:0px;">Run Forecast Model</div>
<div class="t" style="right:1142px;top:1618.4px;font-size:22px;color:#64748b;font-weight:400;letter-spacing:0px;">500ms</div>
<div class="a" style="left:2715px;top:1604px;width:107px;height:47px;border-radius:24px;background:#dcfce7;"></div>
<div class="t" style="left:2768.5px;transform:translateX(-50%);top:1619.8px;font-size:18px;color:#15803d;font-weight:700;letter-spacing:0.2px;">SUCCESS</div>
<div class="a" style="left:1869px;top:1684px;width:999px;height:76px;overflow:hidden;">
<div class="a" style="left:29px;top:0px;width:941px;height:80px;border-radius:16px;background:#f8fafc;border:1px solid #dce2e9;"></div>
<svg class="a" style="left:48px;top:26px;" width="28" height="28" viewBox="0 0 24 24" preserveAspectRatio="none"><path fill="#10b981" fill-rule="evenodd" d="M12 1a11 11 0 1 1 0 22a11 11 0 0 1 0-22zm4.6 6.7l-6.2 6.2l-2.9-2.9l-1.8 1.8l4.7 4.7l8-8z"/></svg>
<div class="t" style="left:96px;top:28.3px;font-size:24.5px;color:#334155;font-weight:700;letter-spacing:0px;">Get Fleet State</div>
<div class="t" style="right:170px;top:30.4px;font-size:22px;color:#64748b;font-weight:400;letter-spacing:0px;">150ms</div>
<div class="a" style="left:846px;top:16px;width:107px;height:47px;border-radius:24px;background:#dcfce7;"></div>
<div class="t" style="left:899.5px;transform:translateX(-50%);top:31.8px;font-size:18px;color:#15803d;font-weight:700;letter-spacing:0.2px;">SUCCESS</div>
</div>
<div class="a" style="left:1866px;top:1794px;width:1004px;height:400px;border-radius:24px;background:#ffffff;border:1px solid #dce2e9;overflow:hidden;box-shadow:0 4px 12px rgba(15,23,42,0.07),0 1px 3px rgba(15,23,42,0.05);"><div style="position:absolute;left:0;top:0;right:0;height:93px;background:linear-gradient(90deg,#f8fafc,#f1f5f9);border-bottom:2px solid #e3e8ee;"></div></div>
<svg class="a" style="left:1899px;top:1826px;" width="28" height="28" viewBox="0 0 24 24" preserveAspectRatio="none"><path fill="#f59e0b" fill-rule="evenodd" d="M13 1.1A11 11 0 0 1 22.9 11H13z M11 3.1V13h9.9A10 10 0 1 1 11 3.1z M14.2 14.4H23a10 10 0 0 1-2.9 6z"/></svg>
<div class="t" style="left:1946px;top:1828.0px;font-size:26px;color:#2a3649;font-weight:700;letter-spacing:0px;">Token Breakdown</div>
<div class="t" style="left:1898px;top:1926.5px;font-size:23px;color:#64748b;font-weight:400;letter-spacing:0px;">System Prompt</div>
<div class="a" style="left:2093px;top:1931px;width:632px;height:16px;border-radius:8px;background:#e2e8f0;"></div>
<div class="a" style="left:2093px;top:1931px;width:158px;height:16px;border-radius:8px;background:#6366f1;"></div>
<div class="t" style="right:1002px;top:1925.7px;font-size:24px;color:#334155;font-weight:400;letter-spacing:0px;">1,850</div>
<div class="t" style="left:1898px;top:1982.5px;font-size:23px;color:#64748b;font-weight:400;letter-spacing:0px;">RAG Context</div>
<div class="a" style="left:2093px;top:1987px;width:632px;height:16px;border-radius:8px;background:#e2e8f0;"></div>
<div class="a" style="left:2093px;top:1987px;width:100px;height:16px;border-radius:8px;background:#ec4899;"></div>
<div class="t" style="right:1002px;top:1981.7px;font-size:24px;color:#334155;font-weight:400;letter-spacing:0px;">1,200</div>
<div class="a" style="left:2915px;top:808px;width:879px;height:745px;border-radius:24px;background:#ffffff;border:1px solid #dce2e9;overflow:hidden;box-shadow:0 4px 12px rgba(15,23,42,0.07),0 1px 3px rgba(15,23,42,0.05);"><div style="position:absolute;left:0;top:0;right:0;height:95px;background:linear-gradient(90deg,#f8fafc,#f1f5f9);border-bottom:2px solid #e3e8ee;"></div></div>
<svg class="a" style="left:2948px;top:842px;" width="30" height="28" viewBox="0 0 24 24" preserveAspectRatio="none"><path fill="#ec4899" fill-rule="evenodd" d="M12 1c5.5 0 10 1.9 10 4.2v1.4C22 8.9 17.5 10.8 12 10.8S2 8.9 2 6.6V5.2C2 2.9 6.5 1 12 1z M2 9.6c2 1.7 5.9 2.7 10 2.7s8-1 10-2.7v3.6c0 2.3-4.5 4.2-10 4.2S2 15.5 2 13.2z M2 16.2c2 1.7 5.9 2.7 10 2.7s8-1 10-2.7v2.6C22 21.1 17.5 23 12 23S2 21.1 2 18.8z"/></svg>
<div class="t" style="left:2996px;top:844.5px;font-size:26px;color:#2a3649;font-weight:700;letter-spacing:0px;">RAG Configuration</div>
<div class="t" style="left:2940px;top:950.4px;font-size:23.3px;color:#64748b;font-weight:400;letter-spacing:0px;">Embedding Model</div>
<div class="a" style="left:3511px;top:938px;width:259px;height:46px;border-radius:10px;background:#f1f5f9;"></div>
<div class="t" style="right:81px;top:950.8px;font-size:22.8px;color:#334155;font-weight:400;letter-spacing:0px;-webkit-text-stroke:0.45px #334155;">text-embedding-3-large</div>
<div class="a" style="left:2940px;top:997px;width:830px;height:2px;background:#f1f5f9;"></div>
<div class="t" style="left:2940px;top:1030.8px;font-size:23.3px;color:#64748b;font-weight:400;letter-spacing:0px;">Dimensions</div>
<div class="t" style="right:70px;top:1031.5px;font-size:22.5px;color:#334155;font-weight:700;letter-spacing:0px;">1536</div>
<div class="a" style="left:2940px;top:1072px;width:830px;height:2px;background:#f1f5f9;"></div>
<div class="t" style="left:2940px;top:1105.2px;font-size:23.3px;color:#64748b;font-weight:400;letter-spacing:0px;">Top-K</div>
<div class="t" style="right:70px;top:1105.9px;font-size:22.5px;color:#334155;font-weight:700;letter-spacing:0px;">5</div>
<div class="a" style="left:2940px;top:1147px;width:830px;height:2px;background:#f1f5f9;"></div>
<div class="t" style="left:2940px;top:1180.4px;font-size:23.3px;color:#64748b;font-weight:400;letter-spacing:0px;">Similarity Threshold</div>
<div class="t" style="right:70px;top:1181.1px;font-size:22.5px;color:#334155;font-weight:700;letter-spacing:0px;">0.78</div>
<div class="a" style="left:2940px;top:1222px;width:830px;height:2px;background:#f1f5f9;"></div>
<div class="t" style="left:2940px;top:1255.8px;font-size:23.3px;color:#64748b;font-weight:400;letter-spacing:0px;">Chunk Size</div>
<div class="t" style="right:70px;top:1256.5px;font-size:22.5px;color:#334155;font-weight:700;letter-spacing:0px;">512 tokens</div>
<div class="a" style="left:2940px;top:1297px;width:830px;height:2px;background:#f1f5f9;"></div>
<div class="t" style="left:2940px;top:1330.4px;font-size:23.3px;color:#64748b;font-weight:400;letter-spacing:0px;">Chunk Overlap</div>
<div class="t" style="right:70px;top:1331.1px;font-size:22.5px;color:#334155;font-weight:700;letter-spacing:0px;">50 tokens</div>
<div class="a" style="left:2940px;top:1373px;width:830px;height:2px;background:#f1f5f9;"></div>
<div class="t" style="left:2940px;top:1405.6px;font-size:23.3px;color:#64748b;font-weight:400;letter-spacing:0px;">Reranker</div>
<div class="t" style="right:70px;top:1406.3px;font-size:22.5px;color:#10b981;font-weight:700;letter-spacing:0px;">Enabled</div>
<div class="a" style="left:2940px;top:1448px;width:830px;height:2px;background:#f1f5f9;"></div>
<div class="t" style="left:2940px;top:1484.8px;font-size:23.3px;color:#64748b;font-weight:400;letter-spacing:0px;">Reranker Model</div>
<div class="a" style="left:3576px;top:1472px;width:194px;height:48px;border-radius:10px;background:#f1f5f9;"></div>
<div class="t" style="right:81px;top:1485.2px;font-size:22.8px;color:#334155;font-weight:400;letter-spacing:0px;-webkit-text-stroke:0.45px #334155;">cohere-rerank-v3</div>
<div class="a" style="left:2915px;top:1586px;width:879px;height:600px;border-radius:24px;background:#ffffff;border:1px solid #dce2e9;overflow:hidden;box-shadow:0 4px 12px rgba(15,23,42,0.07),0 1px 3px rgba(15,23,42,0.05);"><div style="position:absolute;left:0;top:0;right:0;height:94px;background:linear-gradient(90deg,#f8fafc,#f1f5f9);border-bottom:2px solid #e3e8ee;"></div></div>
<svg class="a" style="left:2950px;top:1619px;" width="27" height="27" viewBox="0 0 24 24" preserveAspectRatio="none"><path fill="#8b5cf6" fill-rule="evenodd" d="M11.2 1.5v21c-1.4 1-2.6.9-3.6.5c-1.3-.6-1.7-1.6-1.9-2.2c-1.6-.2-3-1.5-3.2-3.2C1 16.9.3 15.7.5 14.3c.1-1 .7-1.8 1.3-2.3C1.3 11.2 1.1 10.1 1.5 9c.4-1.1 1.2-1.8 2.2-2.1C3.5 5.3 4.5 3.9 6 3.4c.5-1.3 1.6-2.1 2.9-2.2c.9-.1 1.7 0 2.3.3z M12.8 1.5c.6-.3 1.4-.4 2.3-.3c1.3.1 2.4.9 2.9 2.2c1.5.5 2.5 1.9 2.3 3.5c1 .3 1.8 1 2.2 2.1c.4 1.1.2 2.2-.3 3c.6.5 1.2 1.3 1.3 2.3c.2 1.4-.5 2.6-1.7 3.3c-.2 1.7-1.6 3-3.2 3.2c-.2.6-.6 1.6-1.9 2.2c-1 .4-2.2.5-3.6-.5z"/></svg>
<div class="t" style="left:2996px;top:1618.9px;font-size:26.5px;color:#2a3649;font-weight:700;letter-spacing:0px;">Inference Config</div>
<div class="t" style="left:2940px;top:1727.8px;font-size:23.3px;color:#64748b;font-weight:400;letter-spacing:0px;">Model</div>
<div class="a" style="left:3451px;top:1715px;width:319px;height:47px;border-radius:10px;background:#f1f5f9;"></div>
<div class="t" style="right:81px;top:1728.2px;font-size:22.8px;color:#334155;font-weight:400;letter-spacing:0px;-webkit-text-stroke:0.45px #334155;">claude-3-5-sonnet-20241022</div>
<div class="a" style="left:2940px;top:1774px;width:830px;height:2px;background:#f1f5f9;"></div>
<div class="t" style="left:2940px;top:1807.5px;font-size:23.3px;color:#64748b;font-weight:400;letter-spacing:0px;">Provider</div>
<div class="t" style="right:70px;top:1808.2px;font-size:22.5px;color:#334155;font-weight:700;letter-spacing:0px;">Anthropic</div>
<div class="a" style="left:2940px;top:1849px;width:830px;height:2px;background:#f1f5f9;"></div>
<div class="t" style="left:2940px;top:1882.3px;font-size:23.3px;color:#64748b;font-weight:400;letter-spacing:0px;">Max Tokens</div>
<div class="t" style="right:70px;top:1883.0px;font-size:22.5px;color:#334155;font-weight:700;letter-spacing:0px;">8,192</div>
<div class="a" style="left:2940px;top:1924px;width:830px;height:2px;background:#f1f5f9;"></div>
<div class="t" style="left:2940px;top:1957.1px;font-size:23.3px;color:#64748b;font-weight:400;letter-spacing:0px;">Temperature</div>
<div class="t" style="right:70px;top:1957.8px;font-size:22.5px;color:#334155;font-weight:700;letter-spacing:0px;">0.3</div>
<div class="a" style="left:2940px;top:2000px;width:830px;height:2px;background:#f1f5f9;"></div>
<div class="a" style="left:520px;top:2018px;width:3320px;height:142px;background:#ffffff;border-top:2px solid #e2e8f0;box-shadow:0 -6px 14px rgba(15,23,42,0.05);"></div>
<div class="a" style="left:3095px;top:2050px;width:233px;height:79px;border-radius:16px;background:#fff;border:1px solid #dce2e9;"></div>
<svg class="a" style="left:3136px;top:2076px;" width="26" height="26" viewBox="0 0 24 24" preserveAspectRatio="none"><path fill="#334155" fill-rule="evenodd" d="M22 10.7v2.6H6.3l5.4 5.4l-1.9 1.8L1.2 12l8.6-8.5l1.9 1.8L6.3 10.7z"/></svg>
<div class="t" style="left:3182px;top:2076.6px;font-size:26px;color:#3f4c60;font-weight:700;letter-spacing:-0.5px;">Previous</div>
<div class="a" style="left:3351px;top:2050px;width:444px;height:79px;border-radius:16px;background:#3b82f6;"></div>
<div class="t" style="left:3389px;top:2076.6px;font-size:26px;color:#ffffff;font-weight:700;letter-spacing:0px;">Next: Agent Collaboration</div>
<svg class="a" style="left:3727px;top:2076px;" width="26" height="26" viewBox="0 0 24 24" preserveAspectRatio="none"><path fill="#ffffff" fill-rule="evenodd" d="M2 10.7v2.6h15.7l-5.4 5.4l1.9 1.8l8.6-8.5l-8.6-8.5l-1.9 1.8l5.4 5.4z"/></svg>
<script>(function(){var s=window.innerWidth/3840;if(s>0&&Math.abs(s-1)>0.01){document.documentElement.style.zoom=s;}})();</script>
</body></html>
